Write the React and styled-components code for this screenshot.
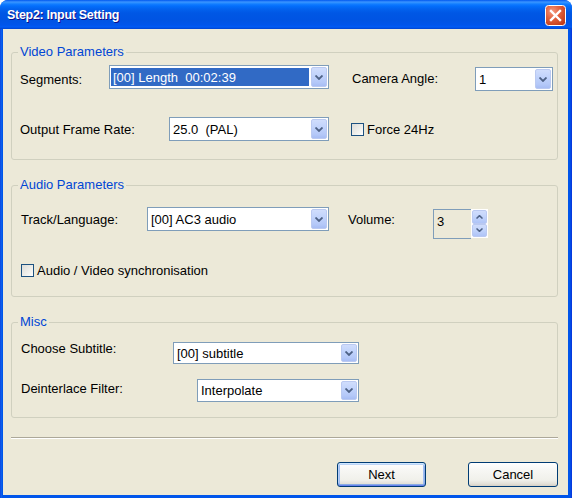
import React from "react";
import styled, { createGlobalStyle } from "styled-components";

const GlobalStyle = createGlobalStyle`
  html, body { margin: 0; padding: 0; background: #ffffff; }
  body { font-family: "Liberation Sans", Arial, sans-serif; font-size: 13px; color: #000; }
  * { box-sizing: border-box; }
`;

const Window = styled.div`
  width: 572px;
  height: 498px;
  display: flex;
  flex-direction: column;
  background: linear-gradient(to right, #0831D9 0, #166AEE 1px, #0055EA 2px, #0055EA calc(100% - 2px), #0831D9 100%);
  border-radius: 8px 8px 0 0;
  overflow: hidden;
`;

const TitleBar = styled.div`
  height: 29px;
  flex: none;
  display: flex;
  align-items: center;
  justify-content: space-between;
  padding: 0 6px 0 7px;
  background: linear-gradient(
    to bottom,
    #0058EE 0px,
    #3A93FF 2px,
    #288EFF 3px,
    #127DFF 4px,
    #036FFC 6px,
    #0262EE 9px,
    #0057E5 13px,
    #0054E3 20px,
    #0055EB 25px,
    #005BF5 27px,
    #0043CF 29px
  );
`;

const Title = styled.div`
  color: #ffffff;
  font-family: "Liberation Sans", Arial, sans-serif;
  font-weight: bold;
  font-size: 12.5px;
  letter-spacing: -0.3px;
  text-shadow: 1px 1px 0 #0F1089;
  padding-top: 1px;
`;

const CloseButton = styled.div`
  width: 21px;
  height: 21px;
  margin-top: 1px;
  display: flex;
`;

const Body = styled.div`
  flex: 1;
  margin: 0 4px 3px 3px;
  background: #ECE9D8;
  padding: 23px 10px 0 8px;
  display: flex;
  flex-direction: column;
`;

const Group = styled.div`
  position: relative;
  border: 1px solid #D0D0BF;
  border-radius: 3px;
  margin-top: ${(p) => p.$mt || 0}px;
  padding: ${(p) => p.$pad};
  display: flex;
  flex-direction: column;
`;

const Legend = styled.span`
  position: absolute;
  top: -9px;
  left: 6px;
  padding: 0 2px;
  line-height: 15px;
  color: #0046D5;
  background: #ECE9D8;
`;

const Row = styled.div`
  display: flex;
  align-items: ${(p) => p.$align || "center"};
  height: ${(p) => p.$h}px;
  margin-top: ${(p) => p.$mt || 0}px;
  padding-left: ${(p) => p.$pl ?? 8}px;
`;

const Label = styled.div`
  width: ${(p) => p.$w}px;
  flex: none;
  line-height: ${(p) => p.$lh || 15}px;
  margin-top: ${(p) => p.$dy || 0}px;
  white-space: nowrap;
`;

const Gap = styled.div`
  width: ${(p) => p.$w}px;
  flex: none;
`;

const ComboBox = styled.div`
  width: ${(p) => p.$w}px;
  height: ${(p) => p.$h || 24}px;
  flex: none;
  border: 1px solid #7F9DB9;
  background: #ffffff;
  padding: 1px;
  display: flex;
  align-self: ${(p) => p.$self || "auto"};
`;

const ComboValue = styled.div`
  flex: 1;
  display: flex;
  align-items: center;
  white-space: pre;
  margin: ${(p) => (p.$selected ? "1px 2px 1px 0" : "0")};
  padding-left: 2px;
  background: ${(p) => (p.$selected ? "#316AC5" : "transparent")};
  color: ${(p) => (p.$selected ? "#ffffff" : "#000000")};
`;

const DropButton = styled.div`
  width: 16px;
  flex: none;
  border: 1px solid #BAC9F1;
  border-radius: 2px;
  background: linear-gradient(to bottom, #D0DDFC 0%, #C1D3FB 40%, #B4C8F8 80%, #A7BDF4 100%);
  display: flex;
  align-items: center;
  justify-content: center;
`;

const SpinWrap = styled.div`
  display: flex;
  margin-top: 2px;
  flex: none;
`;

const SpinEdit = styled.div`
  width: 38px;
  height: 30px;
  border: 1px solid #7F9DB9;
  border-right: none;
  background: #ECE9D8;
  padding: 4px 0 0 3px;
  line-height: 15px;
`;

const SpinButtons = styled.div`
  width: 17px;
  height: 29px;
  background: #ffffff;
  padding: 1px;
  display: flex;
  flex-direction: column;
`;

const SpinButton = styled.div`
  flex: 1;
  border: 1px solid #BAC9F1;
  border-radius: 2px;
  background: linear-gradient(to bottom, #D0DDFC 0%, #C1D3FB 50%, #AFC4F7 100%);
  display: flex;
  align-items: center;
  justify-content: center;
`;

const CheckRow = styled.label`
  display: flex;
  align-items: center;
  gap: 3px;
  white-space: nowrap;
`;

const CheckBox = styled.span`
  width: 13px;
  height: 13px;
  flex: none;
  border: 1px solid #1C5180;
  background: linear-gradient(135deg, #DCDCD7 0%, #F0F0EC 60%, #FFFFFF 100%);
`;

const Separator = styled.div`
  margin-top: 19px;
  height: 2px;
  border-top: 1px solid #ACA899;
  border-bottom: 1px solid #FFFFFF;
`;

const ButtonBar = styled.div`
  display: flex;
  justify-content: flex-end;
  gap: 42px;
  margin-top: 23px;
`;

const Button = styled.div`
  width: ${(p) => p.$w}px;
  height: 25px;
  border: 1px solid #003C74;
  border-radius: 3px;
  background: linear-gradient(to bottom, #FFFFFF 0%, #F7F7F4 30%, #F0F0EA 75%, #E3E1D9 90%, #D6D0C5 100%);
  display: flex;
  align-items: center;
  justify-content: center;
  line-height: 15px;
  box-shadow: ${(p) =>
    p.$default
      ? "inset 0 1px 0 #CEE7FF, inset 0 2px 0 #BCD4F6, inset 0 -1px 0 #6982EE, inset 0 -2px 0 #89ADE4, inset 1px 0 0 #B5CDF6, inset 2px 0 0 #A2BFF1, inset -1px 0 0 #8EAEEA, inset -2px 0 0 #A2BFF1"
      : "none"};
`;

const Chevron = () => (
  <svg width="8" height="5" viewBox="0 0 8 5">
    <path d="M0.5 0.5 L4 4 L7.5 0.5" fill="none" stroke="#4D6185" strokeWidth="1.8" />
  </svg>
);

const SpinArrow = ({ up }) => (
  <svg width="7" height="4" viewBox="0 0 7 4">
    <path d={up ? "M0.5 3.5 L3.5 0.6 L6.5 3.5" : "M0.5 0.5 L3.5 3.4 L6.5 0.5"} fill="none" stroke="#4D6185" strokeWidth="1.5" />
  </svg>
);

const Combo = ({ w, h, value, selected, self }) => (
  <ComboBox $w={w} $h={h} $self={self}>
    <ComboValue $selected={selected}>{value}</ComboValue>
    <DropButton>
      <Chevron />
    </DropButton>
  </ComboBox>
);

const Check = ({ children }) => (
  <CheckRow>
    <CheckBox />
    {children}
  </CheckRow>
);

export default function App() {
  return (
    <>
      <GlobalStyle />
      <Window>
        <TitleBar>
          <Title>Step2: Input Setting</Title>
          <CloseButton>
            <svg width="21" height="21" viewBox="0 0 21 21">
              <defs>
                <radialGradient id="cg" cx="35%" cy="30%" r="80%">
                  <stop offset="0%" stopColor="#F59A80" />
                  <stop offset="45%" stopColor="#E2623F" />
                  <stop offset="100%" stopColor="#C13A17" />
                </radialGradient>
              </defs>
              <rect x="0.5" y="0.5" width="20" height="20" rx="3" fill="url(#cg)" stroke="#ffffff" />
              <path d="M6 6 L15 15 M15 6 L6 15" stroke="#ffffff" strokeWidth="2.4" strokeLinecap="square" />
            </svg>
          </CloseButton>
        </TitleBar>
        <Body>
          <Group $pad="12px 0 18px 0">
            <Legend>Video Parameters</Legend>
            <Row $h={26}>
              <Label $w={89} $dy={2}>Segments:</Label>
              <Combo w={220} value="[00] Length  00:02:39" selected self="flex-start" />
              <Gap $w={23} />
              <Label $w={123}>Camera Angle:</Label>
              <Combo w={78} value="1" self="flex-end" />
            </Row>
            <Row $h={24} $mt={26}>
              <Label $w={149}>Output Frame Rate:</Label>
              <Combo w={160} value="25.0  (PAL)" />
              <Gap $w={22} />
              <Check>Force 24Hz</Check>
            </Row>
          </Group>

          <Group $mt={25} $pad="21px 0 19px 0">
            <Legend>Audio Parameters</Legend>
            <Row $h={32} $align="flex-start" $pl={9}>
              <Label $w={126} $lh={24} $dy={1}>Track/Language:</Label>
              <Combo w={182} value="[00] AC3 audio" />
              <Gap $w={19} />
              <Label $w={85} $lh={24} $dy={1}>Volume:</Label>
              <SpinWrap>
                <SpinEdit>3</SpinEdit>
                <SpinButtons>
                  <SpinButton>
                    <SpinArrow up />
                  </SpinButton>
                  <SpinButton>
                    <SpinArrow />
                  </SpinButton>
                </SpinButtons>
              </SpinWrap>
            </Row>
            <Row $h={13} $mt={25} $pl={9}>
              <Check>Audio / Video synchronisation</Check>
            </Row>
          </Group>

          <Group $mt={25} $pad="19px 0 15px 0">
            <Legend>Misc</Legend>
            <Row $h={22} $align="flex-start" $pl={9}>
              <Label $w={152} $lh={13} $dy={0}>Choose Subtitle:</Label>
              <Combo w={186} h={22} value="[00] subtitle" />
            </Row>
            <Row $h={23} $mt={15} $align="flex-start" $pl={9}>
              <Label $w={176} $lh={13} $dy={3}>Deinterlace Filter:</Label>
              <Combo w={162} h={23} value="Interpolate" />
            </Row>
          </Group>

          <Separator />

          <ButtonBar>
            <Button $w={89} $default>Next</Button>
            <Button $w={90}>Cancel</Button>
          </ButtonBar>
        </Body>
      </Window>
    </>
  );
}
